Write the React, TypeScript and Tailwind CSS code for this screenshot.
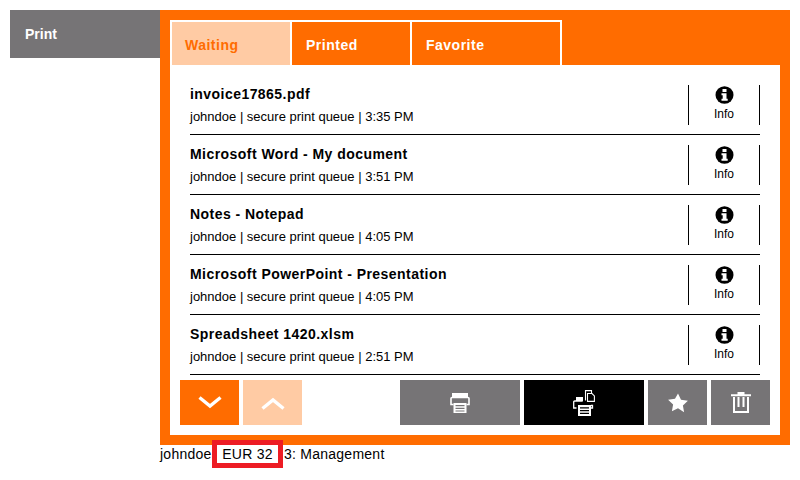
import React from 'react';

const jobs = [
  { title: 'invoice17865.pdf', time: '3:35 PM' },
  { title: 'Microsoft Word - My document', time: '3:51 PM' },
  { title: 'Notes - Notepad', time: '4:05 PM' },
  { title: 'Microsoft PowerPoint - Presentation', time: '4:05 PM' },
  { title: 'Spreadsheet 1420.xlsm', time: '2:51 PM' },
];

const InfoIcon = () => (
  <svg width="19" height="18" viewBox="0 0 19 18">
    <ellipse cx="9.500" cy="9" rx="9" ry="8.800" fill="#000" />
    <rect x="7.500" y="3" width="4" height="3" fill="#fff" />
    <path d="M6.500 7.300h5v5.500h1.200v2H6.500v-2h1.200V9.300H6.500z" fill="#fff" />
  </svg>
);

const Chevron = ({ up }: { up?: boolean }) => (
  <svg width="24" height="14" viewBox="0 0 24 14" fill="none" stroke="#fff" strokeWidth="3.4">
    <path d={up ? 'M1.500 12.500 12 4l10.500 8.500' : 'M1.500 1.500 12 10l10.500-8.500'} />
  </svg>
);

const PrinterIcon = () => (
  <svg width="20" height="20" viewBox="0 0 20 20">
    <path d="M2 0h16v4H2z" fill="#fff" />
    <path d="M3.500 11.500H1V5.500a1 1 0 0 1 1-1h16a1 1 0 0 1 1 1v6h-2.500" fill="none" stroke="#fff" strokeWidth="1.600" />
    <path d="M3.500 10h13v10h-13zm2 2v1.300h9V12zm0 2.800v1.300h9v-1.300zm0 2.700v1h9v-1z" fill="#fff" fillRule="evenodd" />
  </svg>
);

const CopyPrintIcon = () => (
  <svg width="22" height="26" viewBox="0 0 22 26">
    <path d="M3 7h7v4H3z" fill="#fff" />
    <path d="M3.500 18H.700v-6a1 1 0 0 1 1-1h8M18 15.500h1.500V18H17" fill="none" stroke="#fff" strokeWidth="1.300" />
    <path d="M5 15h13v11H5zm2 2.200v1.300h9v-1.300zm0 2.800v1.300h9V20zm0 2.800v1.200h9v-1.200z" fill="#fff" fillRule="evenodd" />
    <path d="M12.500 10.500V.6h6v2.500" fill="none" stroke="#fff" strokeWidth="1.100" />
    <path d="M14.500 3.500h4.500l2.400 2.400v5.500h-6.900z" fill="#000" stroke="#fff" strokeWidth="1.100" />
  </svg>
);

const StarIcon = () => (
  <svg width="20" height="20" viewBox="0 0 20 20" fill="#fff">
    <path d="M10 .5l3 6.300 6.900.9-5 4.800 1.200 6.800L10 15.300l-6.100 3 1.200-6.800-5-4.800 6.900-.9z" />
  </svg>
);

const TrashIcon = () => (
  <svg width="20" height="21" viewBox="0 0 20 21" fill="#fff">
    <path d="M6.500 0h7v2.200H20v2H0v-2h6.500z" />
    <path d="M2 5h2v14h12V5h2v16H2z" />
    <path d="M6.500 5h2v10h-2zM11.500 5h2v10h-2z" />
  </svg>
);

export default function App() {
  return (
    <div className="w-[800px] h-[480px] overflow-hidden bg-white p-[10px] flex font-['Liberation_Sans',Arial,sans-serif] text-black">
      <div className="w-[150px] h-[48px] shrink-0 bg-[#767476] text-white font-bold text-sm pl-[15px] pt-[16px] leading-[16px]">
        Print
      </div>

      <div className="w-[630px] flex flex-col">
        <div className="bg-white border-[10px] border-[#ff6c00] h-[435px] flex flex-col">
          {/* Tabs */}
          <div className="bg-[#ff6c00] h-[45px] flex text-sm font-bold tracking-[0.5px]">
            <div className="bg-white pt-[2px] px-[2px] flex gap-[2px]">
              <div className="w-[118px] bg-[#ffcba4] text-[#ff6c00] pl-[13px] pt-[15px] leading-[16px]">Waiting</div>
              <div className="w-[118px] bg-[#ff6c00] text-white pl-[14px] pt-[15px] leading-[16px]">Printed</div>
              <div className="w-[148px] bg-[#ff6c00] text-white pl-[14px] pt-[15px] leading-[16px]">Favorite</div>
            </div>
          </div>

          {/* Jobs */}
          <div className="flex-1 flex flex-col pl-[20px] pr-[20px] pt-[10px]">
            {jobs.map((job) => (
              <div key={job.title} className="h-[60px] shrink-0 border-b border-black flex items-start">
                <div className="flex-1 min-w-0">
                  <div className="font-bold text-sm tracking-[0.45px] leading-[16px] pt-[11px]">{job.title}</div>
                  <div className="text-[13px] leading-[14px] pt-[8px]">
                    johndoe | secure print queue | {job.time}
                  </div>
                </div>
                <div className="w-[72px] h-[40px] mt-[10px] pt-[1px] border-x border-black flex flex-col items-center">
                  <InfoIcon />
                  <span className="text-xs leading-[14px] mt-[3px]">Info</span>
                </div>
              </div>
            ))}

            {/* Actions */}
            <div className="flex mt-[5px] -mx-[10px] h-[45px]">
              <button className="w-[59px] bg-[#ff6c00] flex items-center justify-center"><Chevron /></button>
              <button className="w-[59px] ml-[4px] bg-[#ffcba4] flex items-center justify-center"><Chevron up /></button>
              <button className="w-[120px] ml-[98px] bg-[#767476] flex items-center justify-center"><PrinterIcon /></button>
              <button className="w-[120px] ml-[4px] bg-black flex items-center justify-center"><CopyPrintIcon /></button>
              <button className="w-[59px] ml-[4px] bg-[#767476] flex items-center justify-center"><StarIcon /></button>
              <button className="w-[59px] ml-[4px] bg-[#767476] flex items-center justify-center"><TrashIcon /></button>
            </div>
          </div>
        </div>

        {/* Footer */}
        <div className="flex items-center text-sm tracking-[0.25px] h-[28px] -mt-[5px]">
          <span className="w-[52px] shrink-0">johndoe</span>
          <span className="relative h-[28px] w-[71px] border-[5px] border-[#ed1c24] bg-white flex items-center justify-center">EUR 32</span>
          <span className="ml-[1px]">3: Management</span>
        </div>
      </div>
    </div>
  );
}
